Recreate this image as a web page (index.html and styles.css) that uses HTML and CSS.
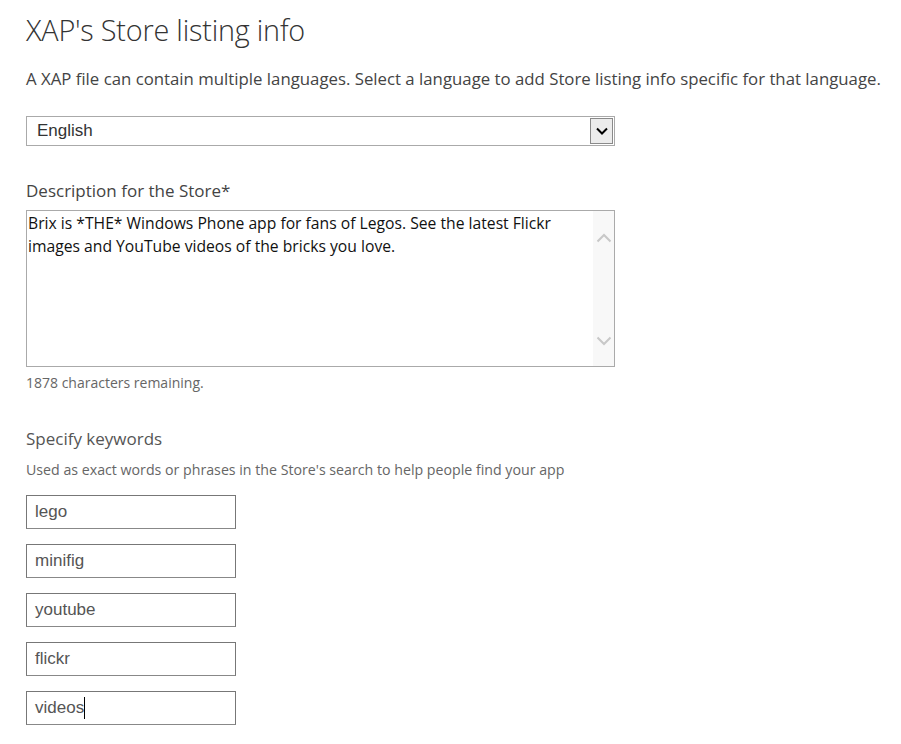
FILE: index.html
```html
<!DOCTYPE html>
<html>
<head>
<meta charset="utf-8">
<link rel="stylesheet" href="styles.css">
</head>
<body>
<div class="page">
  <h1 class="title">XAP's Store listing info</h1>
  <p class="intro">A XAP file can contain multiple languages. Select a language to add Store listing info specific for that language.</p>
  <div class="select">
    <span class="select-value">English</span>
    <span class="select-btn">
      <svg width="14" height="10" viewBox="0 0 14 10"><path d="M2 2.5 L7 7.5 L12 2.5" fill="none" stroke="#000" stroke-width="2"/></svg>
    </span>
  </div>
  <div class="label desc-label">Description for the Store*</div>
  <div class="textarea">
    <div class="textarea-text">Brix is *THE* Windows Phone app for fans of Legos. See the latest Flickr images and YouTube videos of the bricks you love.</div>
    <div class="scrollbar">
      <svg width="16" height="10" viewBox="0 0 16 10"><path d="M1.5 8.5 L8 2 L14.5 8.5" fill="none" stroke="#c8c8c8" stroke-width="2"/></svg>
      <svg width="16" height="10" viewBox="0 0 16 10"><path d="M1.5 1.5 L8 8 L14.5 1.5" fill="none" stroke="#c8c8c8" stroke-width="2"/></svg>
    </div>
  </div>
  <div class="hint">1878 characters remaining.</div>
  <div class="label kw-label">Specify keywords</div>
  <div class="sub">Used as exact words or phrases in the Store's search to help people find your app</div>
  <div class="keywords">
    <div class="kw">lego</div>
    <div class="kw">minifig</div>
    <div class="kw">youtube</div>
    <div class="kw">flickr</div>
    <div class="kw">videos<span class="caret"></span></div>
  </div>
</div>
</body>
</html>
```
FILE: styles.css
```css
html, body {
  margin: 0;
  padding: 0;
  background: #fff;
}
.page {
  padding: 12px 0 0 26px;
  font-family: "Open Sans", "Noto Sans", sans-serif;
  color: #444;
}
.title {
  margin: 0;
  font-size: 28.8px;
  font-weight: 300;
  line-height: 36px;
  color: #333;
  letter-spacing: -0.2px;
}
.intro {
  margin: 20px 0 0;
  font-size: 16.8px;
  line-height: 22px;
  color: #444;
  white-space: nowrap;
}
.select {
  margin-top: 26px;
  width: 589px;
  height: 30px;
  box-sizing: border-box;
  border: 1px solid #aaa;
  display: flex;
  align-items: center;
  justify-content: space-between;
}
.select-value {
  font-family: "Liberation Sans", Arial, sans-serif;
  font-size: 17px;
  color: #333;
  padding-left: 10px;
}
.select-btn {
  width: 23px;
  height: 26px;
  margin-right: 1px;
  box-sizing: border-box;
  border: 1px solid #8a8a8a;
  background: #ececec;
  display: flex;
  align-items: center;
  justify-content: center;
}
.label {
  font-size: 17px;
  line-height: 22px;
  color: #444;
}
.desc-label {
  margin-top: 34px;
}
.textarea {
  margin-top: 8px;
  width: 589px;
  height: 157px;
  box-sizing: border-box;
  border: 1px solid #aaa;
  display: flex;
}
.textarea-text {
  flex: 1;
  padding: 1px 0 0 1px;
  font-size: 15.7px;
  line-height: 23px;
  color: #111;
}
.scrollbar {
  width: 21px;
  background: #f8f8f8;
  display: flex;
  flex-direction: column;
  justify-content: space-between;
  align-items: center;
  padding: 22px 0 20px;
}
.hint {
  margin-top: 7px;
  font-size: 14px;
  line-height: 18px;
  color: #666;
}
.kw-label {
  margin-top: 36px;
  color: #555;
}
.sub {
  margin-top: 11px;
  font-size: 14.2px;
  line-height: 18px;
  color: #666;
}
.keywords {
  margin-top: 16px;
  display: flex;
  flex-direction: column;
  gap: 15px;
}
.kw {
  width: 210px;
  height: 34px;
  box-sizing: border-box;
  border: 1px solid #777;
  border-bottom-color: #888;
  padding-left: 8px;
  display: flex;
  align-items: center;
  font-family: "Liberation Sans", Arial, sans-serif;
  font-size: 17px;
  color: #555;
}
.caret {
  display: inline-block;
  width: 1px;
  height: 22px;
  background: #000;
}
```
